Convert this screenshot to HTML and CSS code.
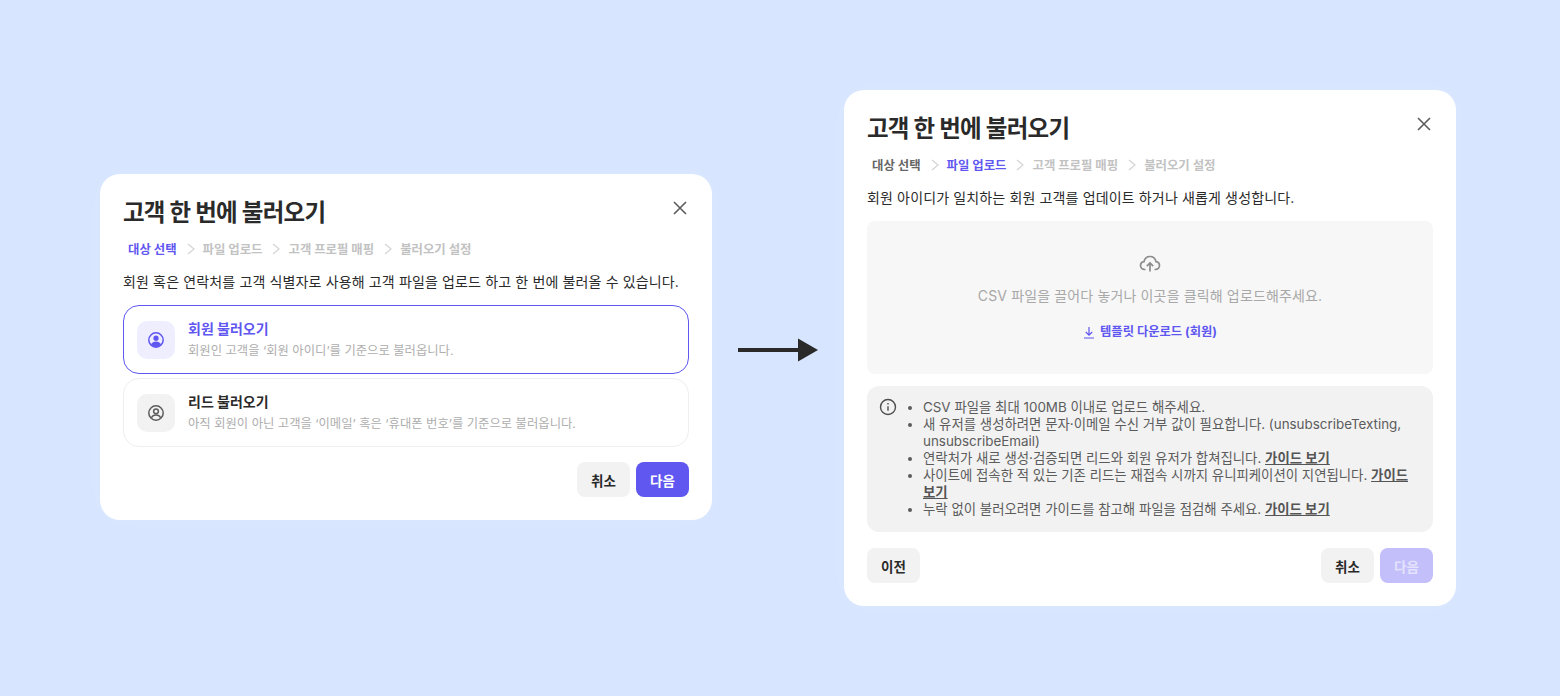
FILE: index.html
```html
<!DOCTYPE html>
<html lang="ko">
<head>
  <meta charset="UTF-8">
  <meta name="viewport" content="width=device-width, initial-scale=1.0">
  <title>고객 한 번에 불러오기</title>
  <link rel="stylesheet" href="styles.css">
</head>
<body>

  <div class="wrapper">
    <!-- Step 1: target select -->
    <div class="modal modal-first">
      <div class="modal-head">
        <h2>고객 한 번에 불러오기</h2>
        <svg class="close" width="20" height="20" viewBox="0 0 20 20"><path d="M4 4l12 12M16 4L4 16"/></svg>
      </div>
      <div class="steps">
        <span class="step active">대상 선택</span>
        <svg class="chev" width="8" height="12" viewBox="0 0 8 12"><path d="M1 1l6 5-6 5"/></svg>
        <span class="step">파일 업로드</span>
        <svg class="chev" width="8" height="12" viewBox="0 0 8 12"><path d="M1 1l6 5-6 5"/></svg>
        <span class="step">고객 프로필 매핑</span>
        <svg class="chev" width="8" height="12" viewBox="0 0 8 12"><path d="M1 1l6 5-6 5"/></svg>
        <span class="step">불러오기 설정</span>
      </div>
      <p class="desc">회원 혹은 연락처를 고객 식별자로 사용해 고객 파일을 업로드 하고 한 번에 불러올 수 있습니다.</p>

      <div class="option selected">
        <div class="option-icon">
          <svg width="18" height="18" viewBox="0 0 18 18"><circle class="ring" cx="9" cy="9" r="7.2"/><circle class="fill" cx="9" cy="7.2" r="2.6"/><path class="fill" d="M3.9 13.6c1-2 3-3 5.1-3s4.100 1 5.100 3c-1.300 1.400-3.100 2.300-5.100 2.300s-3.800-.9-5.100-2.300z"/></svg>
        </div>
        <div>
          <div class="option-title">회원 불러오기</div>
          <div class="option-sub">회원인 고객을 ‘회원 아이디’를 기준으로 불러옵니다.</div>
        </div>
      </div>
      <div class="option">
        <div class="option-icon">
          <svg width="18" height="18" viewBox="0 0 18 18"><circle class="ring" cx="9" cy="9" r="7.2"/><circle class="ring" cx="9" cy="7.300" r="2.400"/><path class="ring" d="M4.400 13.800c.9-1.900 2.700-2.900 4.600-2.900s3.700 1 4.600 2.900"/></svg>
        </div>
        <div>
          <div class="option-title">리드 불러오기</div>
          <div class="option-sub">아직 회원이 아닌 고객을 ‘이메일’ 혹은 ‘휴대폰 번호’를 기준으로 불러옵니다.</div>
        </div>
      </div>

      <div class="actions">
        <div></div>
        <div class="btn-group">
          <button class="btn">취소</button>
          <button class="btn primary">다음</button>
        </div>
      </div>
    </div>

    <svg class="arrow" width="80" height="24" viewBox="0 0 80 24"><path d="M0 10h60v4H0z"/><path d="M60 .5l20 11.500-20 11.500z"/></svg>

    <!-- Step 2: file upload -->
    <div class="modal">
      <div class="modal-head">
        <h2>고객 한 번에 불러오기</h2>
        <svg class="close" width="20" height="20" viewBox="0 0 20 20"><path d="M4 4l12 12M16 4L4 16"/></svg>
      </div>
      <div class="steps">
        <span class="step done">대상 선택</span>
        <svg class="chev" width="8" height="12" viewBox="0 0 8 12"><path d="M1 1l6 5-6 5"/></svg>
        <span class="step active">파일 업로드</span>
        <svg class="chev" width="8" height="12" viewBox="0 0 8 12"><path d="M1 1l6 5-6 5"/></svg>
        <span class="step">고객 프로필 매핑</span>
        <svg class="chev" width="8" height="12" viewBox="0 0 8 12"><path d="M1 1l6 5-6 5"/></svg>
        <span class="step">불러오기 설정</span>
      </div>
      <p class="desc">회원 아이디가 일치하는 회원 고객를 업데이트 하거나 새롭게 생성합니다.</p>

      <div class="dropzone">
        <svg class="cloud" width="22" height="18" viewBox="0 0 22 18"><path d="M6.500 14.500H5.600C3.300 14.500 1.500 12.800 1.500 10.600c0-2 1.500-3.600 3.500-3.900C5.600 3.700 8 1.500 11 1.500s5.400 2.200 6 5.200c2 .3 3.500 1.900 3.500 3.900 0 2.200-1.800 3.900-4.100 3.900h-.9"/><path d="M11 16.500V8.500M7.800 11.200L11 8l3.200 3.200"/></svg>
        <p class="drop-text">CSV 파일을 끌어다 놓거나 이곳을 클릭해 업로드해주세요.</p>
        <div class="template">
          <svg width="12" height="13" viewBox="0 0 12 13"><path d="M6 1v8M2.800 6L6 9.200 9.200 6M1 12h10"/></svg>
          <span>템플릿 다운로드 (회원)</span>
        </div>
      </div>

      <div class="info">
        <svg class="info-icon" width="18" height="18" viewBox="0 0 18 18"><circle cx="9" cy="9" r="7.500"/><path d="M9 8.200v4.600"/><path d="M9 5v1.400"/></svg>
        <ul>
          <li>CSV 파일을 최대 100MB 이내로 업로드 해주세요.</li>
          <li>새 유저를 생성하려면 문자·이메일 수신 거부 값이 필요합니다. (unsubscribeTexting, unsubscribeEmail)</li>
          <li>연락처가 새로 생성·검증되면 리드와 회원 유저가 합쳐집니다. <a>가이드 보기</a></li>
          <li>사이트에 접속한 적 있는 기존 리드는 재접속 시까지 유니피케이션이 지연됩니다. <a>가이드 보기</a></li>
          <li>누락 없이 불러오려면 가이드를 참고해 파일을 점검해 주세요. <a>가이드 보기</a></li>
        </ul>
      </div>

      <div class="actions">
        <button class="btn">이전</button>
        <div class="btn-group">
          <button class="btn">취소</button>
          <button class="btn disabled">다음</button>
        </div>
      </div>
    </div>
  </div>

</body>
</html>
```

FILE: styles.css
```css
body {
  font-family: "Inter", "Noto Sans CJK KR", sans-serif;
  background-color: #d7e5ff;
  color: #2a2a2a;
  height: 696px;
  margin: 0;
  overflow: hidden;
}
.wrapper {
  display: flex;
  align-items: center;
  height: 100%;
  padding-left: 100px;
  gap: 26px;
}
.modal {
  width: 612px;
  box-sizing: border-box;
  padding: 24px 23px 23px;
  background-color: #fff;
  border-radius: 20px;
  box-shadow: 0 0 30px rgba(255, 255, 255, 0.12);
}
.modal-first {
  margin-bottom: 2px;
}
.modal-head {
  display: flex;
  justify-content: space-between;
  align-items: flex-start;
}
h2 {
  margin: 0;
  font-size: 23.5px;
  line-height: 30px;
  font-weight: 700;
  letter-spacing: -0.75px;
}
.close {
  margin-right: -1px;
}
.close path {
  fill: none;
  stroke: #5c5c5c;
  stroke-width: 1.6;
}
.steps {
  display: flex;
  align-items: center;
  gap: 8px;
  margin-top: 12px;
  padding-left: 5px;
  height: 18px;
  font-size: 12.4px;
  font-weight: 700;
}
.step {
  color: #c2c2c2;
}
.step.active {
  color: #5f57f0;
}
.step.done {
  color: #666;
}
.chev {
  margin-left: 2px;
}
.chev path {
  fill: none;
  stroke: #d4d4d4;
  stroke-width: 1.2;
}
.desc {
  margin: 13px 0;
  font-size: 14px;
  line-height: 21px;
  letter-spacing: 0.14px;
}
.option {
  display: flex;
  align-items: center;
  gap: 13px;
  height: 69px;
  box-sizing: border-box;
  padding-left: 13px;
  border: 1px solid #eeeeee;
  border-radius: 16px;
  margin-bottom: 4px;
}
.option.selected {
  border-color: #5f57f0;
}
.option-icon {
  width: 38px;
  height: 38px;
  border-radius: 10px;
  background-color: #f2f2f2;
  display: flex;
  align-items: center;
  justify-content: center;
}
.ring {
  fill: none;
  stroke: #5c5c5c;
  stroke-width: 1.5;
}
.fill {
  fill: #5f57f0;
}
.selected .option-icon {
  background-color: #efeefe;
}
.selected .ring {
  stroke: #5f57f0;
}
.option-title {
  font-size: 14px;
  line-height: 20px;
  font-weight: 700;
}
.selected .option-title {
  color: #5f57f0;
}
.option-sub {
  margin-top: 3px;
  font-size: 12.33px;
  line-height: 18px;
  color: #aeaeae;
}
.actions {
  display: flex;
  justify-content: space-between;
  margin-top: 15px;
}
.btn-group {
  display: flex;
  gap: 6px;
}
.btn {
  font-family: inherit;
  width: 53px;
  height: 35px;
  padding: 0;
  border: none;
  border-radius: 8px;
  background-color: #f2f2f2;
  color: #2a2a2a;
  font-size: 13.5px;
  font-weight: 700;
}
.btn.primary {
  background-color: #5f57f0;
  color: #fff;
}
.btn.disabled {
  background-color: #c3bffa;
  color: #e4e2fd;
}
.dropzone {
  height: 153px;
  box-sizing: border-box;
  padding-top: 34px;
  border-radius: 8px;
  background-color: #f7f7f7;
  display: flex;
  flex-direction: column;
  align-items: center;
}
.cloud path {
  fill: none;
  stroke: #8c8c8c;
  stroke-width: 1.7;
}
.drop-text {
  margin: 13px 0 0;
  font-size: 14px;
  line-height: 20px;
  letter-spacing: 0.14px;
  color: #a8a8a8;
}
.template {
  display: flex;
  align-items: center;
  gap: 5px;
  margin-top: 17px;
  font-size: 12.3px;
  line-height: 18px;
  font-weight: 700;
  color: #5f57f0;
}
.template path {
  fill: none;
  stroke: #5f57f0;
  stroke-width: 1.2;
}
.info {
  display: flex;
  margin: 12px 0 16px;
  height: 146px;
  box-sizing: border-box;
  padding: 12px 24px 0 12px;
  border-radius: 12px;
  background-color: #f2f2f2;
}
.info-icon {
  flex: none;
  margin-right: 10px;
}
.info-icon circle, .info-icon path {
  fill: none;
  stroke: #4d4d4d;
  stroke-width: 1.4;
}
ul {
  margin: 1px 0 0;
  padding: 0 0 0 16px;
  font-size: 13.4px;
  line-height: 17px;
  color: #5c5c5c;
}
a {
  font-weight: 700;
  text-decoration: underline;
  color: #555;
}
.arrow {
  flex: none;
  margin-top: 4px;
  fill: #2a2a2a;
}
```
